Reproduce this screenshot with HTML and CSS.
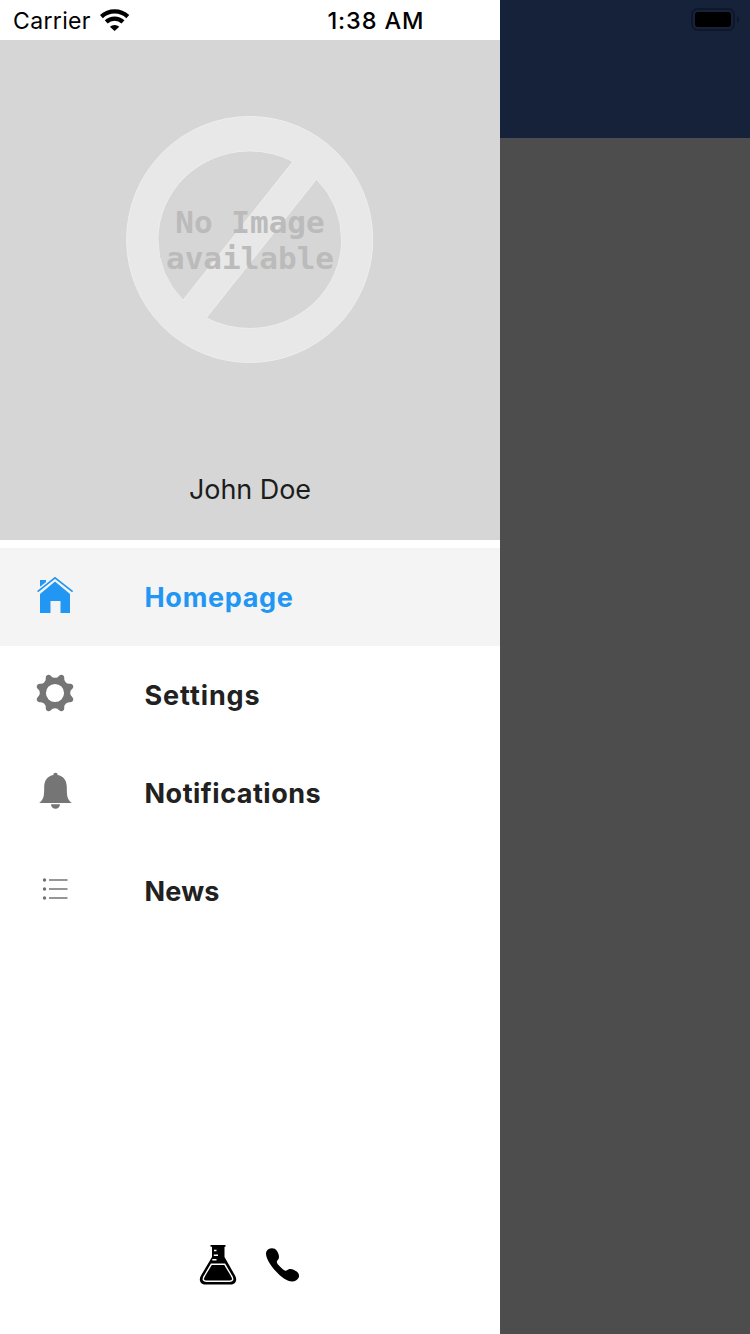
FILE: index.html
```html
<!DOCTYPE html>
<html lang="en">
<head>
<meta charset="utf-8">
<title>Navigation drawer</title>
<link rel="stylesheet" href="styles.css">
</head>
<body>
<div class="screen">
  <aside class="drawer">
    <header class="status">
      <span class="carrier">Carrier</span>
      <svg class="wifi" width="30" height="22" viewBox="0 0 30 22">
        <g fill="none" stroke="#000" stroke-width="4.3">
          <path d="M1.4 7.6A19.5 19.5 0 0 1 27.8 7.6"/>
          <path d="M6.2 12.9A12.4 12.4 0 0 1 23 12.9"/>
        </g>
        <path d="M9.9 17.8A7 7 0 0 1 19.3 17.8L14.6 22Z"/>
      </svg>
      <span class="clock">1:38 AM</span>
    </header>
    <section class="profile">
      <svg class="no-image" width="250" height="250" viewBox="125 115 250 250">
        <path class="ring" fill-rule="evenodd" d="M249.7 116.5a123 123 0 1 1 0 246a123 123 0 1 1 0-246ZM293 161.5A92 89 0 0 0 249.8 150.9A92 89 0 0 0 157.9 239.7A92 89 0 0 0 183 300.2ZM316.5 179.2A92 89 0 0 1 341.7 239.7A92 89 0 0 1 249.8 328.5A92 89 0 0 1 206.2 317.9Z"/>
        <text class="missing" x="250" y="233">No Image</text>
        <text class="missing" x="250" y="269">available</text>
      </svg>
      <span class="name">John Doe</span>
    </section>
    <nav class="menu">
      <a class="item active">
        <svg class="icon" width="40" height="40" viewBox="35 575 40 40">
          <path d="M40 580h6v5.5L40 591ZM55 581.6L70 594v19h-9.5v-12h-10v12H40v-19Z"/>
          <path d="M37.6 591.6L55 577.9L72.6 591.6" fill="none" stroke="#f4f4f4" stroke-width="4.5"/>
          <path d="M37.6 591.6L55 577.9L72.6 591.6" fill="none" stroke="currentColor" stroke-width="1.7"/>
        </svg>
        <span class="label home-label">Homepage</span>
      </a>
      <a class="item">
        <svg class="icon" width="40" height="40" viewBox="-20.5 -20.5 41 41">
          <path fill-rule="evenodd" d="M17.8 4.3A3 3 0 0 1 15.6 9.5A5.2 5.2 0 0 0 9.5 15.6A3 3 0 0 1 4.3 17.8A5.2 5.2 0 0 0-4.3 17.8A3 3 0 0 1-9.5 15.6A5.2 5.2 0 0 0-15.6 9.5A3 3 0 0 1-17.8 4.3A5.2 5.2 0 0 0-17.8-4.3A3 3 0 0 1-15.6-9.5A5.2 5.2 0 0 0-9.5-15.6A3 3 0 0 1-4.3-17.8A5.2 5.2 0 0 0 4.3-17.8A3 3 0 0 1 9.5-15.6A5.2 5.2 0 0 0 15.6-9.5A3 3 0 0 1 17.8-4.3A5.2 5.2 0 0 0 17.8 4.3ZM9.3 0A9.3 9.3 0 1 0-9.3 0A9.3 9.3 0 1 0 9.3 0Z"/>
        </svg>
        <span class="label settings-label">Settings</span>
      </a>
      <a class="item">
        <svg class="icon" width="40" height="40" viewBox="35 771 40 40">
          <path d="M53.3 775A2.2 2.2 0 0 1 57.7 775C63.5 776 66.8 780.5 66.8 787C66.8 796 67.3 799.7 71.8 803H39.2C43.7 799.7 44.2 796 44.2 787C44.2 780.5 47.5 776 53.3 775ZM51 804.3h9A4.5 4.5 0 0 1 51 804.3Z"/>
        </svg>
        <span class="label notifications-label">Notifications</span>
      </a>
      <a class="item">
        <svg class="icon" width="40" height="40" viewBox="35 869 40 40">
          <g fill="#707070"><circle cx="44.5" cy="880" r="1.7"/><circle cx="44.5" cy="889" r="1.7"/><circle cx="44.5" cy="898" r="1.7"/></g>
          <path fill="#969696" d="M49 879h18.5v2H49ZM49 888h18.5v2H49ZM49 897h18.5v2H49Z"/>
        </svg>
        <span class="label news-label">News</span>
      </a>
    </nav>
    <footer class="shortcuts">
      <svg width="38" height="42" viewBox="199 1244 38 42">
        <path d="M210.5 1245h15v1.8H224.5V1257L235 1275.5C238 1280.5 235 1284.5 230.5 1284.5H205.5C201 1284.5 198 1280.5 201 1275.5L212 1257V1246.8H210.5Z"/>
        <path d="M211.3 1264.3H224.7L231.3 1275.5C234 1279.5 232.5 1281.3 229.5 1281.3H206.5C203.5 1281.3 202 1279.5 204.7 1275.5Z" fill="none" stroke="#fff" stroke-width="1.4"/>
        <path d="M214 1250.6h2.5M213.8 1255.2h4.2M212.3 1259.8h4.2" stroke="#fff" stroke-width="1.5"/>
      </svg>
      <svg width="36" height="36" viewBox="265 1247 36 36">
        <path d="M268.3 1249.3C271 1247.8 275 1247.8 277 1251C279 1254.3 279.8 1257.8 278 1259.8C276.3 1261.5 276.5 1262.6 278.5 1265C280.3 1267.2 282.6 1269.3 284.7 1270.5C286.5 1271.3 287 1269.8 288.8 1269.2C292 1268.2 296 1270.5 298 1272.8C300 1275.3 299 1278.3 296.3 1280.2C293 1282.4 288.4 1281.5 284.3 1278.8C278 1274.7 270 1265.5 267 1258.2C265.5 1254.5 265.5 1251.2 268.3 1249.3Z"/>
      </svg>
    </footer>
  </aside>
  <main class="page">
    <div class="appbar">
      <svg width="50" height="26" viewBox="690 7 50 26">
        <rect x="692" y="9" width="42" height="21" rx="5.5" fill="none" stroke="#0f172a" stroke-width="2"/>
        <rect x="695" y="12" width="36" height="15" rx="3"/>
        <path d="M737 16Q739.2 17 739.2 19.5T737 23Z" fill="#0f172a"/>
      </svg>
    </div>
  </main>
</div>
</body>
</html>
```

FILE: styles.css
```css
* { box-sizing: border-box; }
body { margin: 0; font-family: Inter, "Liberation Sans", sans-serif; }
.screen { display: flex; width: 750px; height: 1334px; overflow: hidden; }
.drawer { display: flex; flex-direction: column; width: 500px; background: #fff; }
.status { display: flex; align-items: center; height: 40px; padding: 1px 0 0 13px; font-size: 23px; line-height: 40px; color: #000; }
.carrier { width: 87px; letter-spacing: 0.35px; }
.wifi { margin-top: -2px; }
.clock { margin-left: 197.5px; font-size: 23.5px; font-weight: 500; letter-spacing: 0.85px; white-space: nowrap; }
.profile { display: flex; flex-direction: column; align-items: center; height: 500px; padding-top: 75px; background: #d6d6d6; }
.no-image { flex: none; }
.ring { fill: #e8e8e8; stroke: #eee; stroke-width: 1; }
.missing { font: bold 31px "DejaVu Sans Mono", monospace; text-anchor: middle; fill: #bbb; }
.name { margin-top: 108px; font-size: 27px; line-height: 34px; letter-spacing: -0.05px; color: #1c1c1c; }
.menu { display: flex; flex-direction: column; padding-top: 8px; }
.item { display: flex; align-items: center; gap: 69.5px; height: 98px; padding-left: 35px; color: #212121; }
.active { background: #f4f4f4; color: #2196f3; }
.icon { flex: none; margin-top: -4px; fill: #757575; }
.active .icon { fill: currentColor; }
.label { padding-top: 2px; font-size: 27px; font-weight: 700; line-height: 36px; }
.home-label { letter-spacing: 0.7px; }
.settings-label { letter-spacing: 0.9px; }
.notifications-label { letter-spacing: 0.5px; }
.news-label { letter-spacing: 0.2px; }
.shortcuts { display: flex; align-items: center; gap: 28px; margin-top: auto; padding: 0 0 48px 199px; }
.page { flex: 1; background: #4d4d4d; }
.appbar { display: flex; justify-content: flex-end; height: 138px; padding: 7px 10px 0 0; background: #16213a; }
```
